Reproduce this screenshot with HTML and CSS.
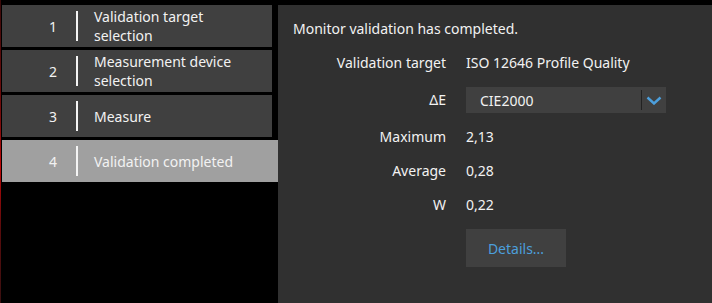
FILE: index.html
```html
<!DOCTYPE html>
<html lang="en">
<head>
<meta charset="utf-8">
<title>Monitor validation</title>
<link rel="stylesheet" href="styles.css">
</head>
<body>
<div class="app">
  <nav class="steps">
    <div class="step">
      <span class="num">1</span><span class="bar"></span>
      <span class="label">Validation target<br>selection</span>
    </div>
    <div class="step">
      <span class="num">2</span><span class="bar"></span>
      <span class="label">Measurement device<br>selection</span>
    </div>
    <div class="step">
      <span class="num">3</span><span class="bar"></span>
      <span class="label">Measure</span>
    </div>
    <div class="step step-active">
      <span class="num">4</span><span class="bar"></span>
      <span class="label">Validation completed</span>
    </div>
  </nav>
  <main class="panel">
    <p class="title">Monitor validation has completed.</p>
    <div class="grid">
      <span class="key">Validation target</span>
      <span class="val">ISO 12646 Profile Quality</span>

      <span class="key">ΔE</span>
      <div class="select">
        <span class="select-text">CIE2000</span>
        <span class="select-sep"></span>
        <svg class="chev" width="16" height="9" viewBox="0 0 16 9"><path d="M1.5 1.5 L8 7.5 L14.5 1.5" fill="none" stroke="#4c9fdc" stroke-width="2.4"/></svg>
      </div>

      <span class="key">Maximum</span>
      <span class="val">2,13</span>

      <span class="key">Average</span>
      <span class="val">0,28</span>

      <span class="key">W</span>
      <span class="val">0,22</span>

      <span class="key"></span>
      <div><button class="btn">Details...</button></div>
    </div>
  </main>
</div>
</body>
</html>
```

FILE: styles.css
```css
html, body {
  margin: 0;
  padding: 0;
  background: #000;
  height: 100%;
}
body {
  font-family: "Noto Sans", "Open Sans", sans-serif;
  font-size: 14px;
  color: #f2f2f2;
}
.app {
  display: flex;
  height: 303px;
  padding-top: 5px;
  box-sizing: border-box;
  border-left: 1px solid #6a1010;
  border-image: linear-gradient(#3a0a0a, #7a0c0c 40%, #c00808 55%, #5a0c0c 75%, #3a1010) 1;
}
.steps {
  width: 276px;
  padding-left: 1px;
  display: flex;
  flex-direction: column;
  gap: 3px;
  flex: none;
}
.step {
  width: 270px;
  height: 42px;
  background: #404040;
  display: flex;
  align-items: center;
}
.step-active {
  width: 276px;
  background: #a0a0a0;
}
.num {
  width: 74px;
  padding-left: 28px;
  box-sizing: border-box;
  text-align: center;
}
.bar {
  width: 2px;
  height: 30px;
  background: #f4f4f4;
  flex: none;
}
.label {
  margin-left: 16px;
  line-height: 19px;
}
.panel {
  flex: 1;
  background: #303030;
  padding: 14px 15px 0 15px;
}
.title {
  margin: 0 0 15px 0;
  line-height: 19px;
}
.grid {
  display: grid;
  grid-template-columns: 153px auto;
  column-gap: 20px;
  row-gap: 15px;
  align-items: center;
  justify-content: start;
  line-height: 19px;
}
.key {
  text-align: right;
}
.select {
  width: 200px;
  height: 26px;
  background: #404040;
  display: flex;
  align-items: center;
  margin-bottom: -1px;
}
.select-text {
  padding-left: 14px;
  flex: 1;
}
.select-sep {
  width: 1px;
  height: 20px;
  background: #222;
}
.chev {
  margin: 1px 4px 0 4px;
  display: block;
}
.btn {
  width: 100px;
  height: 38px;
  background: #404040;
  border: none;
  color: #4c9fdc;
  font-family: inherit;
  font-size: 14px;
  padding: 0;
  display: block;
}
```
